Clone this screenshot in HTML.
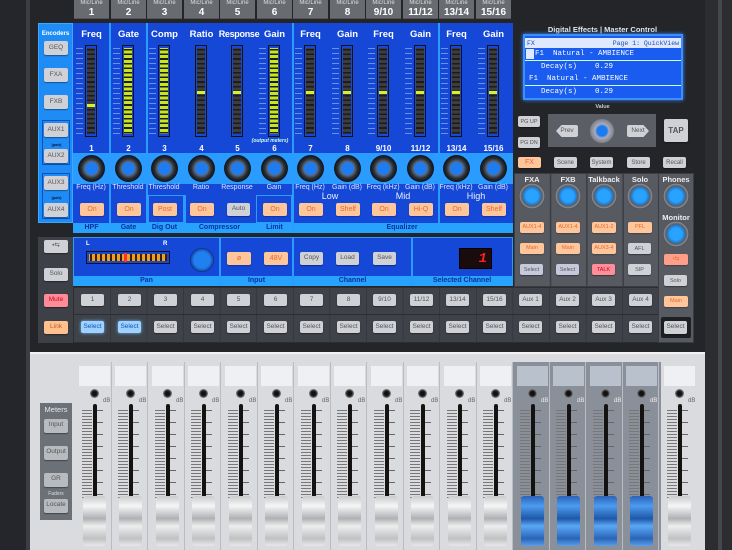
<!DOCTYPE html>
<html><head><meta charset="utf-8"><style>
*{margin:0;padding:0;box-sizing:border-box}
body{width:732px;height:550px;overflow:hidden;background:#1d1f23;font-family:"Liberation Sans",sans-serif;position:relative}
div,span,i,b{position:absolute;display:block}
.t{color:#fff;font-weight:bold;text-align:center;white-space:nowrap}
.tab{top:0;height:19px;width:35px;background:#686b70;border-bottom:1px solid #555;color:#fff;text-align:center;font-size:10px;font-weight:bold;line-height:11px}
.tab small{display:block;font-size:6px;font-weight:normal;color:#ddd;line-height:7px}
.met{top:45px;width:12px;height:92px;background:#222;border:1px solid #111;
 background-image:repeating-linear-gradient(#3c3d3c 0 3px,#1c1c1c 3px 4.6px);background-clip:content-box;padding:2px 1px}
.full{background-image:repeating-linear-gradient(#c6e623 0 3px,#1c1c1c 3px 4.6px)}
.lit{left:1px;width:8px;height:3px;background:#d8f02a}
.knob{top:155px;width:27px;height:27px;border-radius:50%;background:radial-gradient(circle,#1e7cf0 0 6px,#5d6877 7px,#2a3038 10px,#11151b 13px)}
.lab{top:184px;font-size:7px;color:#d8e6ff;text-align:center;width:36px;white-space:nowrap}
.on{height:13px;width:24px;background:#ffc59b;border-radius:2px;color:#e56a2c;font-size:7px;text-align:center;line-height:13px;box-shadow:0 1px 1px #0004;white-space:nowrap;overflow:hidden}
.gb{height:12px;width:23px;background:#cfd1d6;border-radius:2px;color:#555;font-size:6.5px;text-align:center;line-height:12px;box-shadow:0 1px 1px #0006;white-space:nowrap;overflow:hidden}
.sm{font-size:5.5px}
.st{top:362px;width:35px;height:188px;border-right:1px solid #b9bcc0}
.st .sc{left:2px;top:4px;width:31px;height:20px;background:#eef0f3}
.st .scr{left:13px;top:27px;width:9px;height:9px;border-radius:50%;background:radial-gradient(#111 0 2px,#333 3px,#777 4px)}
.st .ln{left:5px;top:48px;width:10px;height:88px;background:repeating-linear-gradient(#777 0 1px,transparent 1px 3px)}
.st .tk{left:20px;top:48px;width:6px;height:88px;background:repeating-linear-gradient(#666 0 1px,transparent 1px 12px)}
.st .sl{left:16px;top:42px;width:4px;height:96px;background:#151312;border-radius:2px}
.st .cap{left:6px;top:134px;width:23px;height:50px;border-radius:3px;background:linear-gradient(#c9cbcd,#f6f6f6 20%,#aeb1b4 45%,#eee 60%,#bfc1c3 85%,#e9e9e9)}
.st .db{left:26px;top:36px;font-size:6px;color:#666}
.aux .cap{background:linear-gradient(#2a62b8,#4d9cf0 20%,#1e58a8 45%,#5aa8f5 60%,#2a64b8 85%,#5aa0e8)}
.aux .sc{background:#b9c2cc}
.sk{width:26px;height:26px;border-radius:50%;background:radial-gradient(circle,#2aa2ff 0 6px,#1c86e6 8px,#5a5e64 10px,#8a8e94 12px,#3a3d42 13px)}
</style></head><body>
<div style="left:0;top:0;width:30px;height:550px;background:#24262b"></div>
<div style="left:26px;top:0;width:4px;height:550px;background:#3a3d42"></div>
<div style="left:705px;top:0;width:27px;height:550px;background:#2b2d31"></div>
<div style="left:718px;top:0;width:4px;height:550px;background:#44474c"></div>
<div style="left:30px;top:0;width:675px;height:352px;background:#232529"></div>

<div class="tab" style="left:74px"><small>Mic/Line</small>1</div>
<div class="tab" style="left:111px"><small>Mic/Line</small>2</div>
<div class="tab" style="left:147px"><small>Mic/Line</small>3</div>
<div class="tab" style="left:184px"><small>Mic/Line</small>4</div>
<div class="tab" style="left:220px"><small>Mic/Line</small>5</div>
<div class="tab" style="left:257px"><small>Mic/Line</small>6</div>
<div class="tab" style="left:293px"><small>Mic/Line</small>7</div>
<div class="tab" style="left:330px"><small>Mic/Line</small>8</div>
<div class="tab" style="left:366px"><small>Mic/Line</small>9/10</div>
<div class="tab" style="left:403px"><small>Mic/Line</small>11/12</div>
<div class="tab" style="left:439px"><small>Mic/Line</small>13/14</div>
<div class="tab" style="left:476px"><small>Mic/Line</small>15/16</div>

<div style="left:38px;top:23px;width:35px;height:200px;background:#1f8cf6;border:1px solid #39a8ff"></div>
<div class="t" style="left:38px;top:31px;width:35px;font-size:6px">Encoders</div>
<div class="gb" style="left:44px;top:41px;width:24px;height:14px;line-height:14px">GEQ</div>
<div class="gb" style="left:44px;top:68px;width:24px;height:14px;line-height:14px">FXA</div>
<div class="gb" style="left:44px;top:95px;width:24px;height:14px;line-height:14px">FXB</div>
<div style="left:42px;top:120px;width:28px;height:45px;border:1px solid #0d4fb8"></div>
<div class="gb" style="left:44px;top:123px;width:24px;height:14px;line-height:14px">AUX1</div>
<div class="t" style="left:45px;top:142px;width:23px;font-size:4px;color:#113">(pair)</div>
<div class="gb" style="left:44px;top:149px;width:24px;height:14px;line-height:14px">AUX2</div>
<div style="left:42px;top:173px;width:28px;height:46px;border:1px solid #0d4fb8"></div>
<div class="gb" style="left:44px;top:176px;width:24px;height:14px;line-height:14px">AUX3</div>
<div class="t" style="left:45px;top:195px;width:23px;font-size:4px;color:#113">(pair)</div>
<div class="gb" style="left:44px;top:203px;width:24px;height:14px;line-height:14px">AUX4</div>

<div style="left:73px;top:23px;width:440px;height:210px;background:#1648d8"></div>
<div style="left:73px;top:153px;width:440px;height:31px;background:#2a9cff"></div>
<div style="left:73px;top:223px;width:440px;height:10px;background:#28a2ff"></div>
<div style="left:109px;top:23px;width:2px;height:200px;background:#2a9cff"></div>
<div style="left:146px;top:23px;width:2px;height:200px;background:#2a9cff"></div>
<div style="left:292px;top:23px;width:2px;height:210px;background:#2a9cff"></div>
<div style="left:438px;top:23px;width:2px;height:200px;background:#2a9cff"></div>
<div style="left:148px;top:195px;width:36px;height:28px;border:1px solid #2a9cff"></div>
<div style="left:256px;top:195px;width:36px;height:28px;border:1px solid #2a9cff"></div>
<div style="left:184px;top:195px;width:2px;height:28px;background:#2a9cff"></div>

<div class="t" style="left:73px;top:29px;width:37px;font-size:9.5px">Freq</div>
<div class="t" style="left:110px;top:29px;width:37px;font-size:9.5px">Gate</div>
<div class="t" style="left:146px;top:29px;width:37px;font-size:9.5px">Comp</div>
<div class="t" style="left:183px;top:29px;width:37px;font-size:9.5px">Ratio</div>
<div class="t" style="left:214px;top:29px;width:50px;font-size:9px;letter-spacing:-0.3px">Response</div>
<div class="t" style="left:256px;top:29px;width:37px;font-size:9.5px">Gain</div>
<div class="t" style="left:292px;top:29px;width:37px;font-size:9.5px">Freq</div>
<div class="t" style="left:329px;top:29px;width:37px;font-size:9.5px">Gain</div>
<div class="t" style="left:365px;top:29px;width:37px;font-size:9.5px">Freq</div>
<div class="t" style="left:402px;top:29px;width:37px;font-size:9.5px">Gain</div>
<div class="t" style="left:438px;top:29px;width:37px;font-size:9.5px">Freq</div>
<div class="t" style="left:475px;top:29px;width:37px;font-size:9.5px">Gain</div>

<div class="met" style="left:85px"><i class="lit" style="top:58px"></i></div>
<div class="met full" style="left:122px"></div>
<div class="met full" style="left:158px"></div>
<div class="met" style="left:195px"><i class="lit" style="top:45px"></i></div>
<div class="met" style="left:231px"><i class="lit" style="top:45px"></i></div>
<div class="met full" style="left:268px"></div>
<div class="met" style="left:304px"><i class="lit" style="top:45px"></i></div>
<div class="met" style="left:341px"><i class="lit" style="top:45px"></i></div>
<div class="met" style="left:377px"><i class="lit" style="top:45px"></i></div>
<div class="met" style="left:414px"><i class="lit" style="top:45px"></i></div>
<div class="met" style="left:450px"><i class="lit" style="top:45px"></i></div>
<div class="met" style="left:487px"><i class="lit" style="top:45px"></i></div>
<div style="left:76px;top:48px;width:7px;height:86px;background:repeating-linear-gradient(#9fc0ff 0 1px,transparent 1px 5px);opacity:.6"></div>
<div style="left:113px;top:48px;width:7px;height:86px;background:repeating-linear-gradient(#9fc0ff 0 1px,transparent 1px 5px);opacity:.6"></div>
<div style="left:149px;top:48px;width:7px;height:86px;background:repeating-linear-gradient(#9fc0ff 0 1px,transparent 1px 5px);opacity:.6"></div>
<div style="left:259px;top:48px;width:7px;height:86px;background:repeating-linear-gradient(#9fc0ff 0 1px,transparent 1px 5px);opacity:.6"></div>
<div style="left:295px;top:48px;width:7px;height:86px;background:repeating-linear-gradient(#9fc0ff 0 1px,transparent 1px 5px);opacity:.6"></div>
<div style="left:332px;top:48px;width:7px;height:86px;background:repeating-linear-gradient(#9fc0ff 0 1px,transparent 1px 5px);opacity:.6"></div>
<div style="left:368px;top:48px;width:7px;height:86px;background:repeating-linear-gradient(#9fc0ff 0 1px,transparent 1px 5px);opacity:.6"></div>
<div style="left:405px;top:48px;width:7px;height:86px;background:repeating-linear-gradient(#9fc0ff 0 1px,transparent 1px 5px);opacity:.6"></div>
<div style="left:441px;top:48px;width:7px;height:86px;background:repeating-linear-gradient(#9fc0ff 0 1px,transparent 1px 5px);opacity:.6"></div>
<div style="left:478px;top:48px;width:7px;height:86px;background:repeating-linear-gradient(#9fc0ff 0 1px,transparent 1px 5px);opacity:.6"></div>
<div class="t" style="left:245px;top:138px;width:50px;font-size:5px;font-style:italic;color:#cfe">(output meters)</div>

<div class="t" style="left:73px;top:144px;width:37px;font-size:8px">1</div>
<div class="t" style="left:110px;top:144px;width:37px;font-size:8px">2</div>
<div class="t" style="left:146px;top:144px;width:37px;font-size:8px">3</div>
<div class="t" style="left:183px;top:144px;width:37px;font-size:8px">4</div>
<div class="t" style="left:219px;top:144px;width:37px;font-size:8px">5</div>
<div class="t" style="left:256px;top:144px;width:37px;font-size:8px">6</div>
<div class="t" style="left:292px;top:144px;width:37px;font-size:8px">7</div>
<div class="t" style="left:329px;top:144px;width:37px;font-size:8px">8</div>
<div class="t" style="left:365px;top:144px;width:37px;font-size:8px">9/10</div>
<div class="t" style="left:402px;top:144px;width:37px;font-size:8px">11/12</div>
<div class="t" style="left:438px;top:144px;width:37px;font-size:8px">13/14</div>
<div class="t" style="left:475px;top:144px;width:37px;font-size:8px">15/16</div>

<div class="knob" style="left:78px"></div><div class="knob" style="left:115px"></div><div class="knob" style="left:151px"></div><div class="knob" style="left:188px"></div><div class="knob" style="left:224px"></div><div class="knob" style="left:261px"></div><div class="knob" style="left:297px"></div><div class="knob" style="left:334px"></div><div class="knob" style="left:370px"></div><div class="knob" style="left:407px"></div><div class="knob" style="left:443px"></div><div class="knob" style="left:480px"></div>

<div class="lab" style="left:73px">Freq (Hz)</div><div class="lab" style="left:110px">Threshold</div><div class="lab" style="left:146px">Threshold</div><div class="lab" style="left:183px">Ratio</div><div class="lab" style="left:219px">Response</div><div class="lab" style="left:256px">Gain</div><div class="lab" style="left:292px">Freq (Hz)</div><div class="lab" style="left:329px">Gain (dB)</div><div class="lab" style="left:365px">Freq (kHz)</div><div class="lab" style="left:402px">Gain (dB)</div><div class="lab" style="left:438px">Freq (kHz)</div><div class="lab" style="left:475px">Gain (dB)</div>
<div class="t" style="left:310px;top:191px;width:40px;font-size:9px;font-weight:normal;color:#e8f0ff">Low</div>
<div class="t" style="left:383px;top:191px;width:40px;font-size:9px;font-weight:normal;color:#e8f0ff">Mid</div>
<div class="t" style="left:456px;top:191px;width:40px;font-size:9px;font-weight:normal;color:#e8f0ff">High</div>

<div class="on" style="left:80px;top:203px">On</div>
<div class="on" style="left:117px;top:203px">On</div>
<div class="on" style="left:153px;top:203px">Post</div>
<div class="on" style="left:190px;top:203px">On</div>
<div class="gb" style="left:227px;top:203px;height:13px">Auto</div>
<div class="on" style="left:263px;top:203px">On</div>
<div class="on" style="left:299px;top:203px">On</div>
<div class="on" style="left:336px;top:203px">Shelf</div>
<div class="on" style="left:372px;top:203px">On</div>
<div class="on" style="left:409px;top:203px">Hi-Q</div>
<div class="on" style="left:445px;top:203px">On</div>
<div class="on" style="left:482px;top:203px">Shelf</div>

<div class="t" style="left:73px;top:224px;width:37px;font-size:7px;color:#0b2f9c">HPF</div>
<div class="t" style="left:110px;top:224px;width:37px;font-size:7px;color:#0b2f9c">Gate</div>
<div class="t" style="left:146px;top:224px;width:37px;font-size:7px;color:#0b2f9c">Dig Out</div>
<div class="t" style="left:183px;top:224px;width:73px;font-size:7px;color:#0b2f9c">Compressor</div>
<div class="t" style="left:256px;top:224px;width:37px;font-size:7px;color:#0b2f9c">Limit</div>
<div class="t" style="left:292px;top:224px;width:220px;font-size:7px;color:#0b2f9c">Equalizer</div>

<div style="left:73px;top:237px;width:440px;height:49px;background:#1648d8;border:1px solid #2a9cff"></div>
<div style="left:73px;top:276px;width:440px;height:10px;background:#28a2ff"></div>
<div style="left:219px;top:237px;width:2px;height:49px;background:#2a9cff"></div>
<div style="left:292px;top:237px;width:2px;height:49px;background:#2a9cff"></div>
<div style="left:411px;top:237px;width:2px;height:49px;background:#2a9cff"></div>
<div class="t" style="left:86px;top:241px;font-size:6px">L</div>
<div class="t" style="left:163px;top:241px;font-size:6px">R</div>
<div style="left:86px;top:251px;width:84px;height:13px;background:#2a1a0a;border:1px solid #111;padding:2px;background-image:repeating-linear-gradient(90deg,#f0a020 0 3px,#3a2000 3px 5px);background-clip:content-box"></div>
<div style="left:124px;top:253px;width:3px;height:9px;background:#ff3030"></div>
<div class="knob" style="left:190px;top:248px;width:24px;height:24px;background:radial-gradient(circle,#2080f0 0 8px,#1550b0 11px,#102060 12px)"></div>
<div class="on" style="left:227px;top:252px">ø</div>
<div class="on" style="left:264px;top:252px">48V</div>
<div class="gb" style="left:300px;top:252px;height:13px">Copy</div>
<div class="gb" style="left:336px;top:252px;height:13px">Load</div>
<div class="gb" style="left:373px;top:252px;height:13px">Save</div>
<div style="left:459px;top:248px;width:33px;height:21px;background:#1a0c0c;border:1px solid #000;color:#ff2020;font-family:'Liberation Mono',monospace;font-size:14px;font-weight:bold;font-style:italic;text-align:right;padding-right:4px;line-height:20px">1</div>
<div class="t" style="left:73px;top:277px;width:147px;font-size:7px;color:#0b2f9c">Pan</div>
<div class="t" style="left:220px;top:277px;width:73px;font-size:7px;color:#0b2f9c">Input</div>
<div class="t" style="left:293px;top:277px;width:119px;font-size:7px;color:#0b2f9c">Channel</div>
<div class="t" style="left:412px;top:277px;width:100px;font-size:7px;color:#0b2f9c">Selected Channel</div>

<div style="left:38px;top:237px;width:35px;height:106px;background:#3d4046"></div>
<div class="gb" style="left:44px;top:240px;height:13px;width:24px">•⇆</div>
<div class="gb" style="left:44px;top:268px;height:13px;width:24px">Solo</div>
<div class="gb" style="left:44px;top:294px;height:13px;width:24px;background:#ff8a98;color:#c01020">Mute</div>
<div class="gb" style="left:44px;top:321px;height:13px;width:24px;background:#ffc08f;color:#c05a20">Link</div>

<div style="left:73px;top:287px;width:586px;height:56px;background:#3f4349;border:1px solid #2b2e33;background-image:linear-gradient(90deg,transparent 36px,#2b2e33 36px 37px,transparent 37px);background-size:36.6px 100%"></div>
<div style="left:73px;top:314px;width:586px;height:1px;background:#2b2e33"></div>
<div class="gb" style="left:81px;top:294px">1</div><div class="gb" style="left:118px;top:294px">2</div><div class="gb" style="left:154px;top:294px">3</div><div class="gb" style="left:191px;top:294px">4</div><div class="gb" style="left:227px;top:294px">5</div><div class="gb" style="left:264px;top:294px">6</div><div class="gb" style="left:300px;top:294px">7</div><div class="gb" style="left:337px;top:294px">8</div><div class="gb" style="left:373px;top:294px">9/10</div><div class="gb" style="left:410px;top:294px">11/12</div><div class="gb" style="left:446px;top:294px">13/14</div><div class="gb" style="left:483px;top:294px">15/16</div><div class="gb" style="left:519px;top:294px">Aux 1</div><div class="gb" style="left:556px;top:294px">Aux 2</div><div class="gb" style="left:592px;top:294px">Aux 3</div><div class="gb" style="left:629px;top:294px">Aux 4</div>
<div class="gb" style="left:81px;top:321px;background:#9fd2ff;color:#1050c0;box-shadow:0 0 3px #6bf">Select</div><div class="gb" style="left:118px;top:321px;background:#9fd2ff;color:#1050c0;box-shadow:0 0 3px #6bf">Select</div><div class="gb" style="left:154px;top:321px">Select</div><div class="gb" style="left:191px;top:321px">Select</div><div class="gb" style="left:227px;top:321px">Select</div><div class="gb" style="left:264px;top:321px">Select</div><div class="gb" style="left:300px;top:321px">Select</div><div class="gb" style="left:337px;top:321px">Select</div><div class="gb" style="left:373px;top:321px">Select</div><div class="gb" style="left:410px;top:321px">Select</div><div class="gb" style="left:446px;top:321px">Select</div><div class="gb" style="left:483px;top:321px">Select</div><div class="gb" style="left:519px;top:321px">Select</div><div class="gb" style="left:556px;top:321px">Select</div><div class="gb" style="left:592px;top:321px">Select</div><div class="gb" style="left:629px;top:321px">Select</div>

<div class="t" style="left:520px;top:25px;width:165px;font-size:7.5px;color:#e6e6e6">Digital Effects | Master Control</div>
<div style="left:523px;top:34px;width:160px;height:66px;background:#1a5cf0;border:2px solid #3a90ff;box-shadow:0 0 4px #3a8cff;font-family:'Liberation Mono',monospace;color:#fff;font-size:7.5px;line-height:11px">
 <span style="left:0;top:2px;width:156px;height:10px;background:#dfe8ff;color:#1a4cc0;padding-left:2px;font-size:6.5px">FX<span style="right:2px;top:0">Page 1: QuickView</span></span>
 <span style="left:10px;top:13px;white-space:pre">F1  Natural - AMBIENCE</span>
 <span style="left:1px;top:13px;width:8px;height:10px;background:#dfe8ff"></span>
 <span style="left:0;top:24px;width:156px;height:1px;background:#cfe"></span>
 <span style="left:16px;top:26px;white-space:pre">Decay(s)    0.29</span>
 <span style="left:4px;top:38px;white-space:pre">F1  Natural - AMBIENCE</span>
 <span style="left:0;top:49px;width:156px;height:1px;background:#cfe"></span>
 <span style="left:16px;top:51px;white-space:pre">Decay(s)    0.29</span>
</div>
<div class="t" style="left:580px;top:104px;width:45px;font-size:5.5px;color:#ccc">Value</div>
<div class="gb" style="left:518px;top:116px;width:22px;height:11px;font-size:5.5px">PG UP</div>
<div class="gb" style="left:518px;top:137px;width:22px;height:11px;font-size:5.5px">PG DN</div>
<div style="left:548px;top:114px;width:108px;height:33px;background:#5b5f65"></div>
<div class="gb" style="left:556px;top:125px;width:22px;height:12px;clip-path:polygon(25% 0,100% 0,100% 100%,25% 100%,0 50%)">Prev</div>
<div class="gb" style="left:627px;top:125px;width:22px;height:12px;clip-path:polygon(0 0,75% 0,100% 50%,75% 100%,0 100%)">Next</div>
<div style="left:590px;top:119px;width:24px;height:24px;border-radius:50%;background:radial-gradient(circle,#1a7cf0 0 5px,#aab 7px,#7c8088 12px)"></div>
<div class="gb" style="left:664px;top:119px;width:24px;height:23px;line-height:23px;font-size:8px;font-weight:bold">TAP</div>
<div class="on" style="left:518px;top:157px;width:23px;height:11px;line-height:11px">FX</div>
<div class="gb" style="left:554px;top:157px;height:11px;font-size:6px">Scene</div>
<div class="gb" style="left:590px;top:157px;height:11px;font-size:6px">System</div>
<div class="gb" style="left:627px;top:157px;height:11px;font-size:6px">Store</div>
<div class="gb" style="left:663px;top:157px;height:11px;font-size:6px">Recall</div>

<div style="left:514px;top:173px;width:145px;height:114px;background:#575b61;background-image:linear-gradient(90deg,transparent 35px,#3a3d42 35px 36.5px,transparent 36.5px);background-size:36.3px 100%;border:1px solid #3a3d42"></div>
<div style="left:658px;top:173px;width:36px;height:170px;background:#575b61;border:1px solid #3a3d42"></div>
<div class="t" style="left:514px;top:175px;width:36px;font-size:7.5px;color:#eee">FXA</div>
<div class="t" style="left:550px;top:175px;width:36px;font-size:7.5px;color:#eee">FXB</div>
<div class="t" style="left:586px;top:175px;width:36px;font-size:7.5px;color:#eee">Talkback</div>
<div class="t" style="left:622px;top:175px;width:36px;font-size:7.5px;color:#eee">Solo</div>
<div class="t" style="left:658px;top:175px;width:36px;font-size:7.5px;color:#eee">Phones</div>
<div class="t" style="left:658px;top:213px;width:36px;font-size:7.5px;color:#eee">Monitor</div>
<div class="sk" style="left:519px;top:183px"></div><div class="sk" style="left:555px;top:183px"></div><div class="sk" style="left:591px;top:183px"></div><div class="sk" style="left:627px;top:183px"></div><div class="sk" style="left:663px;top:183px"></div><div class="sk" style="left:663px;top:221px"></div>
<div class="on sm" style="left:520px;top:222px;height:11px;line-height:11px">AUX1-4</div>
<div class="on sm" style="left:556px;top:222px;height:11px;line-height:11px">AUX1-4</div>
<div class="on sm" style="left:592px;top:222px;height:11px;line-height:11px">AUX1-2</div>
<div class="on sm" style="left:628px;top:222px;height:11px;line-height:11px">PFL</div>
<div class="on sm" style="left:520px;top:243px;height:11px;line-height:11px">Main</div>
<div class="on sm" style="left:556px;top:243px;height:11px;line-height:11px">Main</div>
<div class="on sm" style="left:592px;top:243px;height:11px;line-height:11px">AUX3-4</div>
<div class="gb sm" style="left:628px;top:243px;height:11px">AFL</div>
<div class="gb sm" style="left:520px;top:264px;height:11px;background:#c6c8dc">Select</div>
<div class="gb sm" style="left:556px;top:264px;height:11px;background:#c6c8dc">Select</div>
<div class="gb sm" style="left:592px;top:264px;height:11px;background:#ff8d9a;color:#c01020">TALK</div>
<div class="gb sm" style="left:628px;top:264px;height:11px">SIP</div>
<div class="on sm" style="left:664px;top:254px;height:11px;line-height:11px;background:#ff9f8a">•⇆</div>
<div class="gb sm" style="left:664px;top:275px;height:11px">Solo</div>
<div class="on sm" style="left:664px;top:296px;height:11px;line-height:11px">Main</div>
<div style="left:661px;top:317px;width:30px;height:21px;background:#1e2024;border-radius:2px"></div>
<div class="gb" style="left:664px;top:321px;height:13px">Select</div>

<div style="left:30px;top:352px;width:675px;height:198px;background:#d9dbde;border-top:2px solid #f2f2f2"></div>
<div style="left:40px;top:403px;width:32px;height:117px;background:#6c7178"></div>
<div class="t" style="left:40px;top:405px;width:32px;font-size:7.5px;font-weight:normal;color:#e8e8e8">Meters</div>
<div class="gb" style="left:44px;top:419px;width:24px;height:14px;background:#b7babf">Input</div>
<div class="gb" style="left:44px;top:446px;width:24px;height:14px;background:#b7babf">Output</div>
<div class="gb" style="left:44px;top:473px;width:24px;height:14px;background:#b7babf">GR</div>
<div class="t" style="left:40px;top:491px;width:32px;font-size:5px;font-weight:normal;color:#ddd">Faders</div>
<div class="gb" style="left:44px;top:499px;width:24px;height:14px;background:#b7babf">Locate</div>
<div style="left:513px;top:362px;width:148px;height:188px;background:#8a9099"></div>

<div class="st" style="left:77px"><i class="sc"></i><i class="scr"></i><span class="db">dB</span><i class="ln"></i><i class="tk"></i><i class="sl"></i><i class="cap"></i></div>
<div class="st" style="left:113px"><i class="sc"></i><i class="scr"></i><span class="db">dB</span><i class="ln"></i><i class="tk"></i><i class="sl"></i><i class="cap"></i></div>
<div class="st" style="left:150px"><i class="sc"></i><i class="scr"></i><span class="db">dB</span><i class="ln"></i><i class="tk"></i><i class="sl"></i><i class="cap"></i></div>
<div class="st" style="left:186px"><i class="sc"></i><i class="scr"></i><span class="db">dB</span><i class="ln"></i><i class="tk"></i><i class="sl"></i><i class="cap"></i></div>
<div class="st" style="left:223px"><i class="sc"></i><i class="scr"></i><span class="db">dB</span><i class="ln"></i><i class="tk"></i><i class="sl"></i><i class="cap"></i></div>
<div class="st" style="left:259px"><i class="sc"></i><i class="scr"></i><span class="db">dB</span><i class="ln"></i><i class="tk"></i><i class="sl"></i><i class="cap"></i></div>
<div class="st" style="left:296px"><i class="sc"></i><i class="scr"></i><span class="db">dB</span><i class="ln"></i><i class="tk"></i><i class="sl"></i><i class="cap"></i></div>
<div class="st" style="left:332px"><i class="sc"></i><i class="scr"></i><span class="db">dB</span><i class="ln"></i><i class="tk"></i><i class="sl"></i><i class="cap"></i></div>
<div class="st" style="left:369px"><i class="sc"></i><i class="scr"></i><span class="db">dB</span><i class="ln"></i><i class="tk"></i><i class="sl"></i><i class="cap"></i></div>
<div class="st" style="left:405px"><i class="sc"></i><i class="scr"></i><span class="db">dB</span><i class="ln"></i><i class="tk"></i><i class="sl"></i><i class="cap"></i></div>
<div class="st" style="left:442px"><i class="sc"></i><i class="scr"></i><span class="db">dB</span><i class="ln"></i><i class="tk"></i><i class="sl"></i><i class="cap"></i></div>
<div class="st" style="left:478px"><i class="sc"></i><i class="scr"></i><span class="db">dB</span><i class="ln"></i><i class="tk"></i><i class="sl"></i><i class="cap"></i></div>
<div class="st aux" style="left:515px"><i class="sc"></i><i class="scr"></i><span class="db" style="color:#eee">dB</span><i class="ln"></i><i class="tk"></i><i class="sl"></i><i class="cap"></i></div>
<div class="st aux" style="left:551px"><i class="sc"></i><i class="scr"></i><span class="db" style="color:#eee">dB</span><i class="ln"></i><i class="tk"></i><i class="sl"></i><i class="cap"></i></div>
<div class="st aux" style="left:588px"><i class="sc"></i><i class="scr"></i><span class="db" style="color:#eee">dB</span><i class="ln"></i><i class="tk"></i><i class="sl"></i><i class="cap"></i></div>
<div class="st aux" style="left:624px"><i class="sc"></i><i class="scr"></i><span class="db" style="color:#eee">dB</span><i class="ln"></i><i class="tk"></i><i class="sl"></i><i class="cap"></i></div>
<div class="st" style="left:662px;border-right:none"><i class="sc"></i><i class="scr"></i><span class="db">dB</span><i class="ln"></i><i class="tk"></i><i class="sl"></i><i class="cap"></i></div>
</body></html>
